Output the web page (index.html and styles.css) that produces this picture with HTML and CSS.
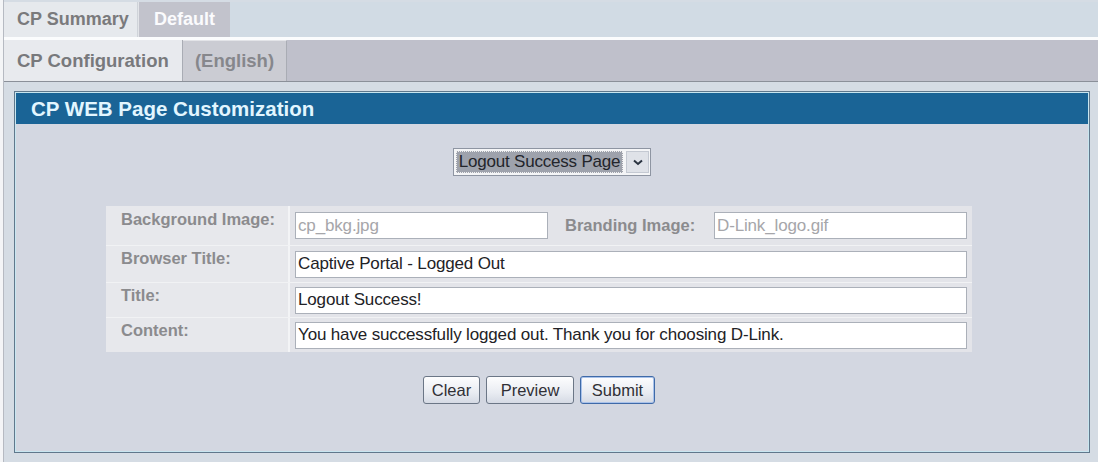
FILE: index.html
```html
<!DOCTYPE html>
<html lang="en">
<head>
    <meta charset="UTF-8">
    <title>CP WEB Page Customization</title>
    <link rel="stylesheet" href="styles.css">
</head>
<body>
    <div class="frame">
        <!-- top level tabs -->
        <div class="tabbar tabbar-main">
            <div class="tab tab-on">CP Summary</div>
            <div class="tab tab-off">Default</div>
        </div>
        <!-- second level tabs -->
        <div class="tabbar tabbar-sub">
            <div class="tab tab-on">CP Configuration</div>
            <div class="tab tab-off">(English)</div>
        </div>

        <div class="content">
            <div class="panel">
                <div class="panel-head">CP WEB Page Customization</div>
                <div class="panel-body">
                    <div class="select-row">
                        <div class="select">
                            <span class="select-value">Logout Success Page</span>
                            <span class="select-arrow">
                                <svg width="10" height="7" viewBox="0 0 10 7"><path d="M1 1.5 L5 5 L9 1.5" fill="none" stroke="#2a3340" stroke-width="2"/></svg>
                            </span>
                        </div>
                    </div>

                    <div class="form">
                        <div class="grid">
                            <div class="lbl r1">Background Image:</div>
                            <div class="cell r1">
                                <input class="field field-half" type="text" value="cp_bkg.jpg" disabled>
                                <span class="lbl-inline">Branding Image:</span>
                                <input class="field field-half" type="text" value="D-Link_logo.gif" disabled>
                            </div>

                            <div class="lbl r2">Browser Title:</div>
                            <div class="cell r2"><input class="field" type="text" value="Captive Portal - Logged Out"></div>

                            <div class="lbl r3">Title:</div>
                            <div class="cell r3"><input class="field" type="text" value="Logout Success!"></div>

                            <div class="lbl r3">Content:</div>
                            <div class="cell r3"><input class="field" type="text" value="You have successfully logged out. Thank you for choosing D-Link."></div>
                        </div>

                        <div class="buttons">
                            <button class="btn btn-clear">Clear</button>
                            <button class="btn btn-preview">Preview</button>
                            <button class="btn btn-submit">Submit</button>
                        </div>
                    </div>
                </div>
            </div>
        </div>
    </div>
</body>
</html>
```

FILE: styles.css
```css
body {
    margin: 0;
    background: #f4f5f7;
    font-family: "Liberation Sans", Arial, sans-serif;
}

.frame {
    margin-left: 3px;
    padding-top: 2px;
    border-left: 1px solid #b6bac2;
    background: #d5dce4;
    height: 460px;
}

/* tab bars */
.tabbar {
    display: flex;
}
.tabbar-main {
    height: 35px;
    background: #d1dbe4;
    border-bottom: 3px solid #fbfcfd;
}
.tabbar-sub {
    height: 41px;
    background: #bfc0cb;
    border-bottom: 1px solid #8b9099;
}
.tab {
    display: flex;
    align-items: center;
    font-weight: bold;
    box-sizing: border-box;
}
.tabbar-main .tab { font-size: 18px; }
.tabbar-sub .tab { font-size: 18.5px; }

.tabbar-main .tab-on {
    width: 134px;
    padding-left: 13px;
    background: #e6e9ed;
    color: #7a7a7c;
    border-right: 1px solid #cfd3d9;
}
.tabbar-main .tab-off {
    width: 92px;
    justify-content: center;
    background: #c2c3cc;
    color: #fbfbfd;
    border-left: 1px solid #e2e4e8;
}
.tabbar-sub .tab-on {
    width: 179px;
    padding-left: 13px;
    background: #e8eaee;
    color: #78797c;
    border-right: 1px solid #a9acb4;
}
.tabbar-sub .tab-off {
    width: 104px;
    justify-content: center;
    background: #cbccd3;
    color: #86878c;
    border-right: 1px solid #a9acb4;
    border-top: 1px solid #e3e4e8;
}

/* main panel */
.content {
    padding: 9px 8px 0 10px;
}
.panel {
    height: 362px;
    border: 1px solid #60788c;
    box-shadow: inset 0 0 0 1px #c8e6f0;
    background: #d3d7e1;
    box-sizing: border-box;
}
.panel-head {
    height: 31px;
    margin: 1px 1px 0 1px;
    background: #1a6496;
    color: #e2f6ff;
    font-size: 20.5px;
    font-weight: bold;
    line-height: 31px;
    padding-left: 15px;
}
.panel-body {
    padding-top: 24px;
}

.select-row {
    display: flex;
    justify-content: center;
}
.select {
    display: flex;
    height: 28px;
    box-sizing: border-box;
    border: 1px solid #8e95a2;
    background: #f4f5f7;
    padding: 2px 1px 2px 2px;
}
.select-value {
    display: flex;
    align-items: center;
    background: #9ea2ac;
    color: #23252b;
    font-size: 17px;
    padding: 0 3px 0 3px;
    outline: 1px dotted #f0f0f0;
    outline-offset: -1px;
    letter-spacing: -0.2px;
}
.select-arrow {
    display: flex;
    align-items: center;
    justify-content: center;
    width: 21px;
    margin-left: 3px;
    background: #dfe2e8;
    border: 1px solid #c4c9d2;
}

/* form grid */
.form {
    width: 866px;
    margin: 30px 0 0 91px;
}
.grid {
    display: grid;
    grid-template-columns: 184px 1fr;
    background: #f1f2f4;
    row-gap: 1px;
}
.lbl {
    box-sizing: border-box;
    background: #e7e8ec;
    color: #8b8b8e;
    font-size: 16.5px;
    font-weight: bold;
    padding: 3px 0 0 15px;
    border-right: 2px solid #f3f4f6;
}
.cell {
    box-sizing: border-box;
    display: flex;
    align-items: center;
    background: #e3e4e9;
    padding: 0 5px 0 3px;
}
.r1 { height: 39px; }
.r2 { height: 36px; }
.r3 { height: 34px; }
.lbl.r1 { padding-top: 4px; }

.field {
    height: 27px;
    width: 672px;
    box-sizing: border-box;
    border: 1px solid #abb0b9;
    background: #fff;
    color: #222226;
    font-family: "Liberation Sans", Arial, sans-serif;
    font-size: 17px;
    letter-spacing: -0.15px;
    padding: 0 2px;
    margin-left: 2px;
}
.field:disabled {
    color: #a6a6aa;
    background: #fff;
}
.field-half { width: 253px; }
.lbl-inline {
    color: #8b8b8e;
    font-size: 16.5px;
    font-weight: bold;
    margin: 0 14px 0 17px;
    width: 135px;
}
.grid .lbl-inline + .field-half { margin-left: 0; }

.buttons {
    display: flex;
    justify-content: center;
    gap: 6px;
    margin-top: 24px;
}
.btn {
    height: 28px;
    border: 1px solid #6b7686;
    border-radius: 3px;
    background: linear-gradient(#fdfdfe, #e9ecf2 60%, #d5dae4);
    color: #303036;
    font-family: "Liberation Sans", Arial, sans-serif;
    font-size: 16.5px;
    padding: 0;
}
.btn-clear { width: 57px; }
.btn-preview { width: 88px; }
.btn-submit {
    width: 75px;
    border-color: #3f6aa8;
    box-shadow: inset 0 0 0 1px #a9c2ea;
}
```
